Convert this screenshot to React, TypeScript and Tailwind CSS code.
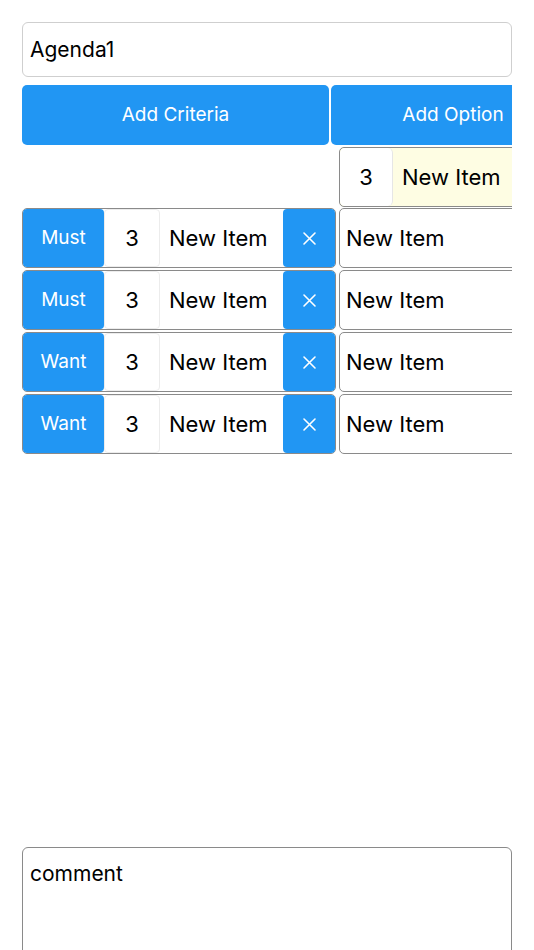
import React from 'react';

const rows = [
  { kind: 'Must', weight: 3, name: 'New Item', option: 'New Item' },
  { kind: 'Must', weight: 3, name: 'New Item', option: 'New Item' },
  { kind: 'Want', weight: 3, name: 'New Item', option: 'New Item' },
  { kind: 'Want', weight: 3, name: 'New Item', option: 'New Item' },
];

export default function App() {
  return (
    <div
      className="w-[534px] h-[950px] bg-white overflow-hidden text-black"
      style={{ fontFamily: 'Inter, "Noto Sans", sans-serif' }}
    >
      <div className="px-[22px] pt-[22px]">
        {/* agenda title */}
        <div className="h-[55px] rounded-[6px] border border-[#cfcfcf] flex items-center px-[7px] text-[21px]">
          Agenda1
        </div>

        <div className="mt-[8px] overflow-hidden">
          {/* header buttons */}
          <div className="flex gap-[2px] w-[800px]">
            <button className="w-[307px] h-[60px] rounded-[5px] bg-[#2196f3] text-white text-[19px]">
              Add Criteria
            </button>
            <button className="w-[244px] h-[60px] rounded-[5px] bg-[#2196f3] text-white text-[19px]">
              Add Option
            </button>
          </div>

          {/* option header */}
          <div className="flex w-[800px] mt-[2px]">
            <div className="w-[317px] shrink-0" />
            <div className="w-[238px] h-[60px] flex rounded-[5px] border-[1.5px] border-[#8a8a8a] overflow-hidden bg-[#fefde3]">
              <div className="w-[53px] bg-white border-r border-[#e6e6e6] rounded-[5px] flex items-center justify-center text-[22px]">
                3
              </div>
              <div className="flex-1 flex items-center pl-[9px] text-[22px]">New Item</div>
            </div>
          </div>

          {/* criteria rows */}
          <div className="flex flex-col gap-[2px] mt-[1px] w-[800px]">
            {rows.map((r, i) => (
              <div key={i} className="flex gap-[3px]">
                <div className="w-[314px] h-[60px] flex rounded-[5px] border-[1.5px] border-[#8a8a8a] overflow-hidden bg-white">
                  <div className="w-[81px] bg-[#2196f3] text-white text-[19px] flex items-center justify-center rounded-r-[4px]">
                    {r.kind}
                  </div>
                  <div className="w-[56px] border border-[#ececec] rounded-[4px] flex items-center justify-center text-[22px]">
                    {r.weight}
                  </div>
                  <div className="w-[123px] flex items-center pl-[9px] text-[22px]">{r.name}</div>
                  <div className="flex-1 bg-[#2196f3] text-white flex items-center justify-center rounded-l-[4px]">
                    <svg width="15" height="15" viewBox="0 0 15 15" fill="none" stroke="white" strokeWidth="1.6" strokeLinecap="round">
                      <path d="M2 2 L13 13 M13 2 L2 13" />
                    </svg>
                  </div>
                </div>
                <div className="w-[238px] h-[60px] rounded-[5px] border-[1.5px] border-[#8a8a8a] flex items-center pl-[6px] text-[22px]">
                  {r.option}
                </div>
              </div>
            ))}
          </div>
        </div>

        {/* comment */}
        <div className="mt-[393px] h-[140px] rounded-[6px] border-[1.5px] border-[#8a8a8a] px-[7px] pt-[10px] text-[21px]">
          comment
        </div>
      </div>
    </div>
  );
}
